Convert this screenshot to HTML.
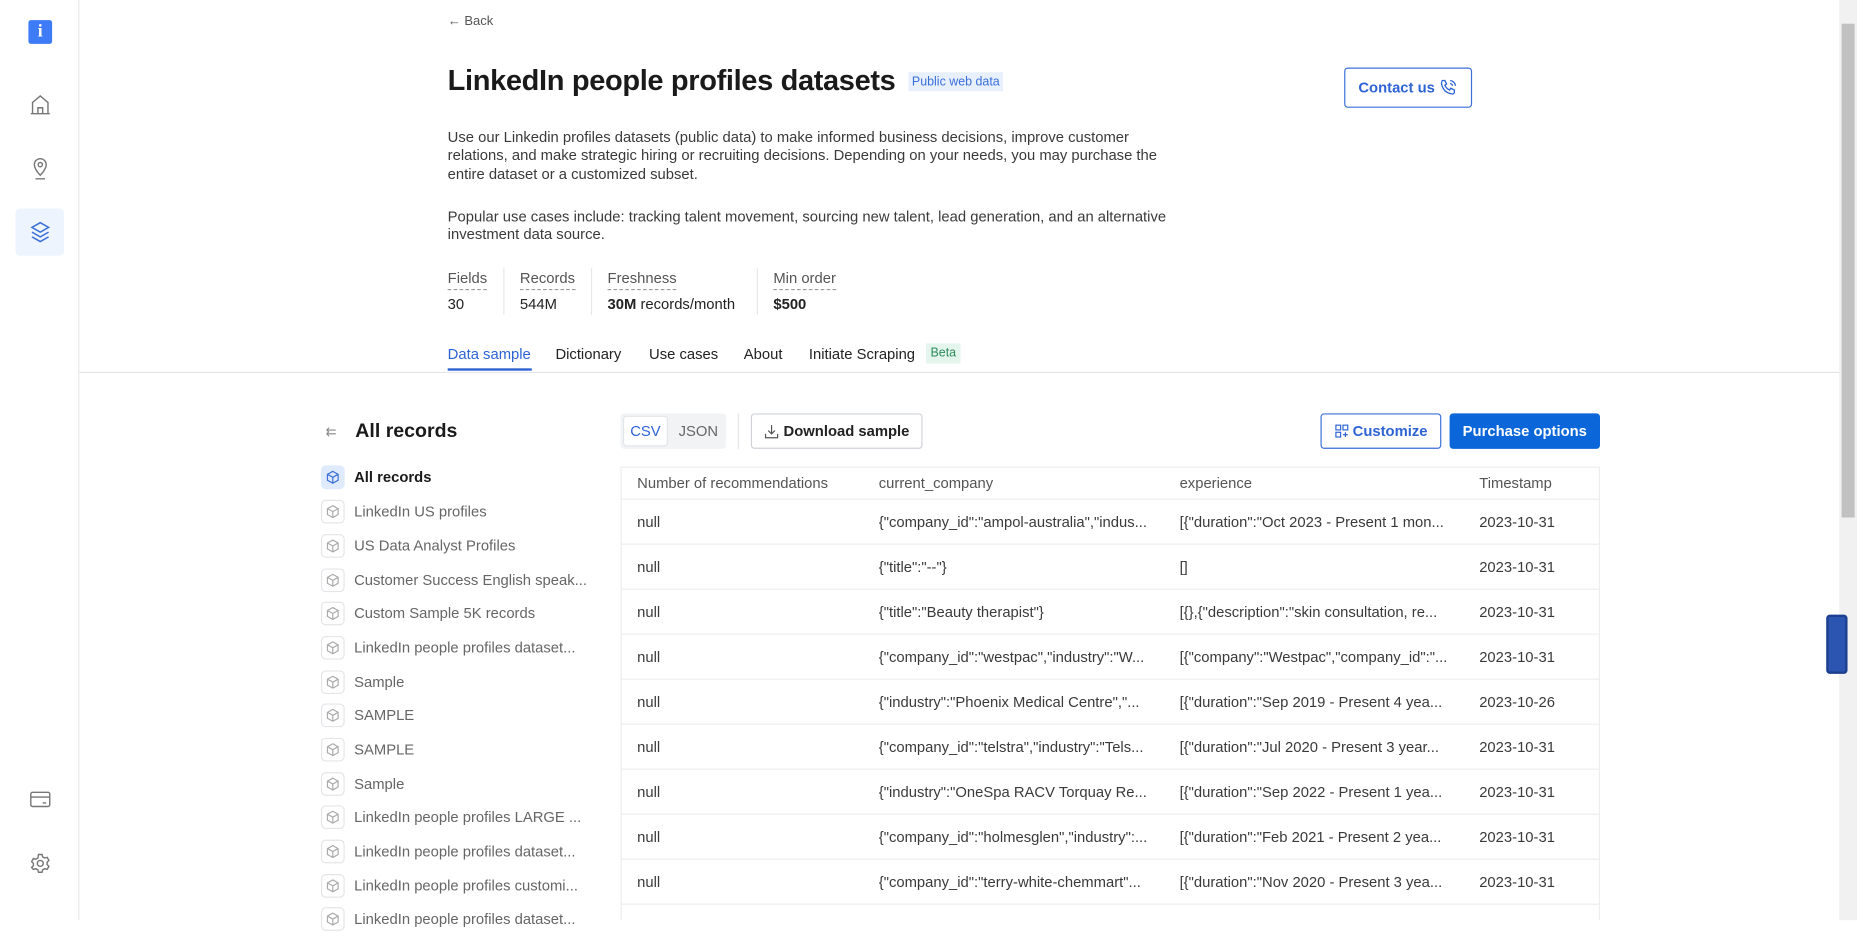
<!DOCTYPE html>
<html><head><meta charset="utf-8">
<style>
*{box-sizing:border-box;margin:0;padding:0}
html,body{width:1857px;height:920px;overflow:hidden;background:#fff}
#w{position:absolute;left:0;top:0;width:1568px;height:777px;transform:scale(1.18431);transform-origin:0 0;font-family:"Liberation Sans",sans-serif;color:#222}
.a{position:absolute;white-space:nowrap}
.sb{position:absolute;left:0;top:0;width:67px;height:777px;border-right:1px solid #e6e8eb}
.ic{position:absolute;left:24px;width:20px;height:20px}
.p{font-size:12.5px;color:#3a3a3a;line-height:15.3px;white-space:normal;width:612px}
.lab{font-size:12.5px;color:#555;border-bottom:1px dashed #999;padding-bottom:2px}
.val{font-size:12.5px;color:#222}
.tab{font-size:12.5px;color:#222;top:292px}
.li{position:absolute;left:271px;height:20px;font-size:12.5px;color:#666}
.li .b{position:absolute;left:0;top:0;width:20px;height:20px;border:1px solid #e3e5e8;border-radius:4px}
.li .b svg{position:absolute;left:3px;top:3px}
.li span{position:absolute;left:28px;top:3px;white-space:nowrap}
.btn{position:absolute;border-radius:3px;font-size:12.5px;font-weight:bold;display:flex;align-items:center;justify-content:center}
.row{position:absolute;left:524px;width:827px;height:38px;border-top:1px solid #eceef0;font-size:12.5px;color:#3a3a3a}
.row span{position:absolute;top:12px;white-space:nowrap}
</style></head><body><div id="w">
<div class="sb">
 <div class="a" style="left:24px;top:17px;width:20px;height:20px;background:#3d7bf7;border-radius:2px;color:#fff;font:bold 15px 'Liberation Serif',serif;text-align:center;line-height:20px">i</div>
 <svg class="ic" style="top:78px" viewBox="0 0 20 20" fill="none" stroke="#777" stroke-width="1.2"><path d="M2 18h16M3.5 18V8.5L10 3l6.5 5.5V18M8 18v-5h4v5"/></svg>
 <svg class="ic" style="top:132px" viewBox="0 0 20 20" fill="none" stroke="#777" stroke-width="1.2"><path d="M10 16s-5-5-5-9a5 5 0 0110 0c0 4-5 9-5 9z"/><circle cx="10" cy="7" r="1.8"/><path d="M6 19h8"/></svg>
 <div class="a" style="left:13px;top:176px;width:41px;height:40px;background:#eef4fd;border-radius:4px"></div>
 <svg class="ic" style="top:186px" viewBox="0 0 20 20" fill="none" stroke="#3b6fd8" stroke-width="1.3"><path d="M10 2l7 4-7 4-7-4z"/><path d="M3 10l7 4 7-4M3 14l7 4 7-4"/></svg>
 <svg class="ic" style="top:665px" viewBox="0 0 20 20" fill="none" stroke="#777" stroke-width="1.2"><rect x="2" y="4" width="16" height="12" rx="1.5"/><path d="M2 8h16M12 13h3"/></svg>
 <svg class="ic" style="top:719px" viewBox="0 0 20 20" fill="none" stroke="#777" stroke-width="1.2"><circle cx="10" cy="10" r="2.5"/><path d="M8.5 2.5h3l.5 2 1.8 1 2-.6 1.5 2.6-1.5 1.5v2l1.5 1.5-1.5 2.6-2-.6-1.8 1-.5 2h-3l-.5-2-1.8-1-2 .6L2.7 13.5 4.2 12v-2L2.7 8.5 4.2 5.9l2 .6 1.8-1z"/></svg>
</div>
<div class="a" style="left:1553px;top:0;width:15px;height:777px;background:#f1f1f1"></div>
<div class="a" style="left:1555px;top:20px;width:11px;height:417px;background:#c1c1c1"></div>
<div class="a" style="left:1542px;top:519px;width:18px;height:50px;border:2px solid #1c3f8f;border-radius:3px;background:#2b55b0"></div>

<div class="a" style="left:378px;top:12px;font-size:11px;color:#555">← Back</div>
<div class="a" style="left:378px;top:55px;font-size:24.5px;font-weight:bold;color:#1a1a1a;letter-spacing:-0.3px">LinkedIn people profiles datasets</div>
<div class="a" style="left:767px;top:61px;height:16px;padding:0 3px;background:#e8f0fd;color:#3b6fd8;font-size:10.5px;line-height:16px">Public web data</div>
<div class="btn" style="left:1135px;top:57px;width:108px;height:34px;border:1px solid #3b6fd8;color:#2e63d4">Contact us&nbsp;<svg width="16" height="16" viewBox="0 0 16 16" fill="none" stroke="#2e63d4" stroke-width="1.1"><path d="M3 2l2 0 1.5 3-1.5 1c.8 1.8 2.2 3.2 4 4l1-1.5 3 1.5v2c0 .8-1 1.5-2 1.3C6 12.5 3.5 10 2.2 5 2 4 2.5 2 3 2z"/><path d="M9.5 4.5a2.5 2.5 0 012 2M9.5 2a5 5 0 014.5 4.5"/></svg></div>

<div class="a p" style="left:378px;top:109px">Use our Linkedin profiles datasets (public data) to make informed business decisions, improve customer relations, and make strategic hiring or recruiting decisions. Depending on your needs, you may purchase the entire dataset or a customized subset.</div>
<div class="a p" style="left:378px;top:176px;width:630px">Popular use cases include: tracking talent movement, sourcing new talent, lead generation, and an alternative investment data source.</div>

<div class="a lab" style="left:378px;top:228px">Fields</div><div class="a val" style="left:378px;top:250px">30</div>
<div class="a" style="left:425px;top:226px;width:1px;height:40px;background:#e6e8eb"></div>
<div class="a lab" style="left:439px;top:228px">Records</div><div class="a val" style="left:439px;top:250px">544M</div>
<div class="a" style="left:499px;top:226px;width:1px;height:40px;background:#e6e8eb"></div>
<div class="a lab" style="left:513px;top:228px">Freshness</div><div class="a val" style="left:513px;top:250px"><b style="font-weight:600">30M</b> records/month</div>
<div class="a" style="left:639px;top:226px;width:1px;height:40px;background:#e6e8eb"></div>
<div class="a lab" style="left:653px;top:228px">Min order</div><div class="a val" style="left:653px;top:250px;font-weight:600">$500</div>

<div class="a tab" style="left:378px;color:#2e63d4">Data sample</div>
<div class="a" style="left:378px;top:311px;width:71px;height:2px;background:#2e63d4"></div>
<div class="a tab" style="left:469px">Dictionary</div>
<div class="a tab" style="left:548px">Use cases</div>
<div class="a tab" style="left:628px">About</div>
<div class="a tab" style="left:683px">Initiate Scraping</div>
<div class="a" style="left:782px;top:290px;width:29px;height:17px;background:#e3f5ec;color:#2f8a5a;font-size:10.5px;text-align:center;line-height:17px">Beta</div>
<div class="a" style="left:67px;top:314px;width:1486px;height:1px;background:#e3e5e8"></div>

<div class="a" style="left:275px;top:358px;font-size:11px;color:#888">⇇</div>
<div class="a" style="left:300px;top:355px;font-size:16.5px;font-weight:bold;color:#1a1a1a">All records</div>

<div class="li" style="top:393px;color:#1a1a1a;font-weight:bold"><div class="b" style="background:#dfeafd;border-color:#dfeafd"><svg width="12" height="12" viewBox="0 0 12 12" fill="none" stroke="#3b6fd8"><path d="M6 1l4.5 2.5v5L6 11 1.5 8.5v-5z M1.5 3.5L6 6l4.5-2.5M6 6v5"/></svg></div><span>All records</span></div>
<div class="li" style="top:422px"><div class="b"><svg width="12" height="12" viewBox="0 0 12 12" fill="none" stroke="#aaa"><path d="M6 1l4.5 2.5v5L6 11 1.5 8.5v-5z M1.5 3.5L6 6l4.5-2.5M6 6v5"/></svg></div><span>LinkedIn US profiles</span></div>
<div class="li" style="top:451px"><div class="b"><svg width="12" height="12" viewBox="0 0 12 12" fill="none" stroke="#aaa"><path d="M6 1l4.5 2.5v5L6 11 1.5 8.5v-5z M1.5 3.5L6 6l4.5-2.5M6 6v5"/></svg></div><span>US Data Analyst Profiles</span></div>
<div class="li" style="top:480px"><div class="b"><svg width="12" height="12" viewBox="0 0 12 12" fill="none" stroke="#aaa"><path d="M6 1l4.5 2.5v5L6 11 1.5 8.5v-5z M1.5 3.5L6 6l4.5-2.5M6 6v5"/></svg></div><span>Customer Success English speak...</span></div>
<div class="li" style="top:508px"><div class="b"><svg width="12" height="12" viewBox="0 0 12 12" fill="none" stroke="#aaa"><path d="M6 1l4.5 2.5v5L6 11 1.5 8.5v-5z M1.5 3.5L6 6l4.5-2.5M6 6v5"/></svg></div><span>Custom Sample 5K records</span></div>
<div class="li" style="top:537px"><div class="b"><svg width="12" height="12" viewBox="0 0 12 12" fill="none" stroke="#aaa"><path d="M6 1l4.5 2.5v5L6 11 1.5 8.5v-5z M1.5 3.5L6 6l4.5-2.5M6 6v5"/></svg></div><span>LinkedIn people profiles dataset...</span></div>
<div class="li" style="top:566px"><div class="b"><svg width="12" height="12" viewBox="0 0 12 12" fill="none" stroke="#aaa"><path d="M6 1l4.5 2.5v5L6 11 1.5 8.5v-5z M1.5 3.5L6 6l4.5-2.5M6 6v5"/></svg></div><span>Sample</span></div>
<div class="li" style="top:594px"><div class="b"><svg width="12" height="12" viewBox="0 0 12 12" fill="none" stroke="#aaa"><path d="M6 1l4.5 2.5v5L6 11 1.5 8.5v-5z M1.5 3.5L6 6l4.5-2.5M6 6v5"/></svg></div><span>SAMPLE</span></div>
<div class="li" style="top:623px"><div class="b"><svg width="12" height="12" viewBox="0 0 12 12" fill="none" stroke="#aaa"><path d="M6 1l4.5 2.5v5L6 11 1.5 8.5v-5z M1.5 3.5L6 6l4.5-2.5M6 6v5"/></svg></div><span>SAMPLE</span></div>
<div class="li" style="top:652px"><div class="b"><svg width="12" height="12" viewBox="0 0 12 12" fill="none" stroke="#aaa"><path d="M6 1l4.5 2.5v5L6 11 1.5 8.5v-5z M1.5 3.5L6 6l4.5-2.5M6 6v5"/></svg></div><span>Sample</span></div>
<div class="li" style="top:680px"><div class="b"><svg width="12" height="12" viewBox="0 0 12 12" fill="none" stroke="#aaa"><path d="M6 1l4.5 2.5v5L6 11 1.5 8.5v-5z M1.5 3.5L6 6l4.5-2.5M6 6v5"/></svg></div><span>LinkedIn people profiles LARGE ...</span></div>
<div class="li" style="top:709px"><div class="b"><svg width="12" height="12" viewBox="0 0 12 12" fill="none" stroke="#aaa"><path d="M6 1l4.5 2.5v5L6 11 1.5 8.5v-5z M1.5 3.5L6 6l4.5-2.5M6 6v5"/></svg></div><span>LinkedIn people profiles dataset...</span></div>
<div class="li" style="top:738px"><div class="b"><svg width="12" height="12" viewBox="0 0 12 12" fill="none" stroke="#aaa"><path d="M6 1l4.5 2.5v5L6 11 1.5 8.5v-5z M1.5 3.5L6 6l4.5-2.5M6 6v5"/></svg></div><span>LinkedIn people profiles customi...</span></div>
<div class="li" style="top:766px"><div class="b"><svg width="12" height="12" viewBox="0 0 12 12" fill="none" stroke="#aaa"><path d="M6 1l4.5 2.5v5L6 11 1.5 8.5v-5z M1.5 3.5L6 6l4.5-2.5M6 6v5"/></svg></div><span>LinkedIn people profiles dataset...</span></div>

<div class="a" style="left:524px;top:349px;width:89px;height:30px;background:#f1f3f5;border-radius:3px"></div>
<div class="a" style="left:526px;top:351px;width:38px;height:26px;background:#fff;border:1px solid #e3e5e8;border-radius:3px;color:#2e63d4;font-size:12.5px;text-align:center;line-height:24px">CSV</div>
<div class="a" style="left:573px;top:357px;font-size:12.5px;color:#666">JSON</div>
<div class="a" style="left:623px;top:349px;width:1px;height:30px;background:#e3e5e8"></div>
<div class="btn" style="left:634px;top:349px;width:145px;height:30px;border:1px solid #cfd3d8;color:#222;font-weight:600"><svg width="13" height="13" viewBox="0 0 14 14" fill="none" stroke="#555" stroke-width="1.1"><path d="M7 1v8M4 6l3 3 3-3M1.5 9v3.5h11V9"/></svg>&nbsp;Download sample</div>
<div class="btn" style="left:1115px;top:349px;width:102px;height:30px;border:1px solid #3b6fd8;color:#2e63d4"><svg width="12" height="12" viewBox="0 0 12 12" fill="none" stroke="#2e63d4"><rect x="1" y="1" width="4" height="4"/><rect x="7" y="1" width="4" height="4"/><rect x="1" y="7" width="4" height="4"/><path d="M9 7v4M7 9h4"/></svg>&nbsp;Customize</div>
<div class="btn" style="left:1224px;top:349px;width:127px;height:30px;background:#0b67d9;color:#fff">Purchase options</div>

<div class="a" style="left:524px;top:394px;width:827px;height:383px;border:1px solid #eceef0;border-bottom:none"></div>
<div class="row" style="top:394px;height:28px;border-top:none;color:#555"><span style="left:14px;top:7px">Number of recommendations</span><span style="left:218px;top:7px">current_company</span><span style="left:472px;top:7px">experience</span><span style="left:725px;top:7px">Timestamp</span></div>
<div class="row" style="top:421px"><span style="left:14px">null</span><span style="left:218px">{"company_id":"ampol-australia","indus...</span><span style="left:472px">[{"duration":"Oct 2023 - Present 1 mon...</span><span style="left:725px">2023-10-31</span></div>
<div class="row" style="top:459px"><span style="left:14px">null</span><span style="left:218px">{"title":"--"}</span><span style="left:472px">[]</span><span style="left:725px">2023-10-31</span></div>
<div class="row" style="top:497px"><span style="left:14px">null</span><span style="left:218px">{"title":"Beauty therapist"}</span><span style="left:472px">[{},{"description":"skin consultation, re...</span><span style="left:725px">2023-10-31</span></div>
<div class="row" style="top:535px"><span style="left:14px">null</span><span style="left:218px">{"company_id":"westpac","industry":"W...</span><span style="left:472px">[{"company":"Westpac","company_id":"...</span><span style="left:725px">2023-10-31</span></div>
<div class="row" style="top:573px"><span style="left:14px">null</span><span style="left:218px">{"industry":"Phoenix Medical Centre","...</span><span style="left:472px">[{"duration":"Sep 2019 - Present 4 yea...</span><span style="left:725px">2023-10-26</span></div>
<div class="row" style="top:611px"><span style="left:14px">null</span><span style="left:218px">{"company_id":"telstra","industry":"Tels...</span><span style="left:472px">[{"duration":"Jul 2020 - Present 3 year...</span><span style="left:725px">2023-10-31</span></div>
<div class="row" style="top:649px"><span style="left:14px">null</span><span style="left:218px">{"industry":"OneSpa RACV Torquay Re...</span><span style="left:472px">[{"duration":"Sep 2022 - Present 1 yea...</span><span style="left:725px">2023-10-31</span></div>
<div class="row" style="top:687px"><span style="left:14px">null</span><span style="left:218px">{"company_id":"holmesglen","industry":...</span><span style="left:472px">[{"duration":"Feb 2021 - Present 2 yea...</span><span style="left:725px">2023-10-31</span></div>
<div class="row" style="top:725px"><span style="left:14px">null</span><span style="left:218px">{"company_id":"terry-white-chemmart"...</span><span style="left:472px">[{"duration":"Nov 2020 - Present 3 yea...</span><span style="left:725px">2023-10-31</span></div>
<div class="row" style="top:763px"></div>
</div></body></html>
